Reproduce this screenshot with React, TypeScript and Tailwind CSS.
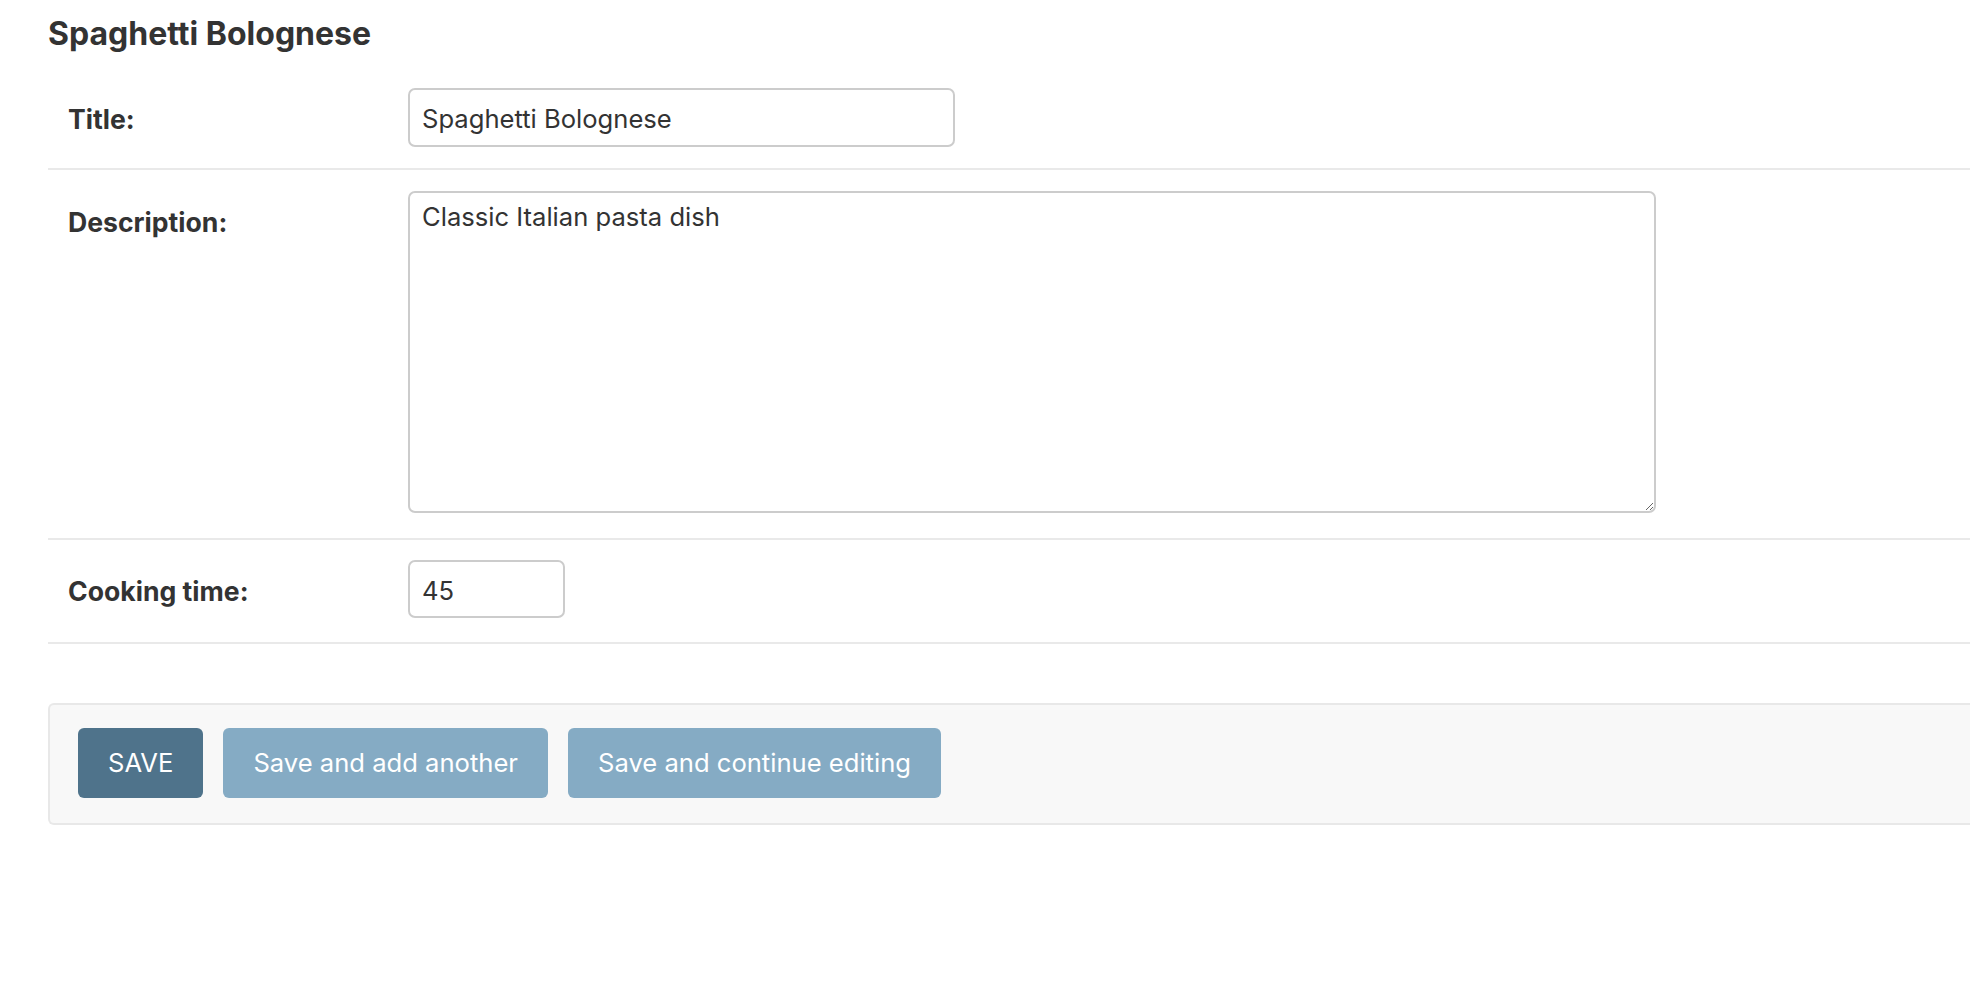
import { useState } from "react";

const font = { fontFamily: "Inter, 'Liberation Sans', sans-serif" };

export default function App() {
  const [title, setTitle] = useState("Spaghetti Bolognese");
  const [description, setDescription] = useState("Classic Italian pasta dish");
  const [time, setTime] = useState("45");

  const labelCls = "w-[340px] shrink-0 leading-[56px] pt-[3px] text-[26.6px] font-bold text-[#333]";
  const rowCls = "flex items-start pl-[20px] border-b-2 border-[#e9e9e9]";
  const btnCls = "h-[70px] px-[30px] rounded-[6px] text-white text-[25.6px]";

  return (
    <div className="min-h-screen bg-white pl-[48px] pt-[14px] overflow-hidden" style={font}>
      <h2 className="text-[32px] leading-[40px] font-bold text-[#333]">Spaghetti Bolognese</h2>

      <div className="mt-[14px]">
        <div className={`${rowCls} pt-[20px] pb-[21px]`}>
          <label className={labelCls}>Title:</label>
          <input
            value={title}
            onChange={(e) => setTitle(e.target.value)}
            className="w-[547px] h-[59px] px-[12px] pt-[2px] border-2 border-[#cccccc] rounded-[7px] text-[25.6px] text-[#333] outline-none"
          />
        </div>

        <div className={`${rowCls} pt-[21px] pb-[25px]`}>
          <label className={labelCls}>Description:</label>
          <textarea
            value={description}
            onChange={(e) => setDescription(e.target.value)}
            className="block w-[1248px] h-[322px] px-[12px] pt-[10px] border-2 border-[#cccccc] rounded-[7px] text-[25.6px] leading-[28px] text-[#333] outline-none"
          />
        </div>

        <div className={`${rowCls} pt-[20px] pb-[23px]`}>
          <label className={labelCls}>Cooking time:</label>
          <input
            value={time}
            onChange={(e) => setTime(e.target.value)}
            className="w-[157px] h-[58px] px-[12px] pt-[2px] border-2 border-[#cccccc] rounded-[7px] text-[25.6px] text-[#333] outline-none"
          />
        </div>
      </div>

      <div className="mt-[59px] flex items-center gap-[20px] pl-[28px] pt-[23px] pb-[25px] bg-[#f8f8f8] border-2 border-r-0 border-[#e8e8e8] rounded-l-[6px]">
        <button className={`${btnCls} bg-[#4f738b]`}>SAVE</button>
        <button className={`${btnCls} bg-[#85abc4]`}>Save and add another</button>
        <button className={`${btnCls} bg-[#85abc4]`}>Save and continue editing</button>
      </div>
    </div>
  );
}
